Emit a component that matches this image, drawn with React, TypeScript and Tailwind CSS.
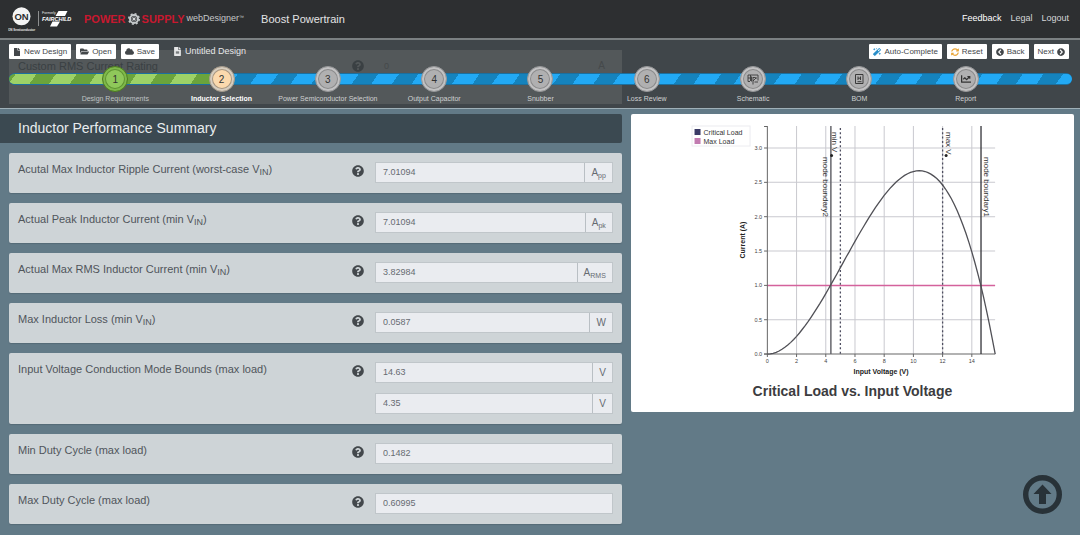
import React from "react";
import {
  FaChartLine,
  FaChevronCircleLeft,
  FaChevronCircleRight,
  FaCloud,
  FaFile,
  FaFileAlt,
  FaFolderOpen,
  FaMagic,
  FaQuestionCircle,
  FaSyncAlt,
} from "react-icons/fa";

type Field = { value: string; unit?: React.ReactNode };
type Row = { id: string; label: React.ReactNode; name: string; fields: Field[] };

const vin = (
  <>
    V<sub className="text-[9px]">IN</sub>
  </>
);

const sub = (base: string, lower: string) => (
  <span>
    {base}
    <sub className="text-[7px]">{lower}</sub>
  </span>
);

const rows: Row[] = [
  {
    id: "ripple",
    name: "Max inductor ripple current",
    label: <>Acutal Max Inductor Ripple Current (worst-case {vin})</>,
    fields: [{ value: "7.01094", unit: sub("A", "pp") }],
  },
  {
    id: "peak",
    name: "Peak inductor current",
    label: <>Actual Peak Inductor Current (min {vin})</>,
    fields: [{ value: "7.01094", unit: sub("A", "pk") }],
  },
  {
    id: "rms",
    name: "Max RMS inductor current",
    label: <>Actual Max RMS Inductor Current (min {vin})</>,
    fields: [{ value: "3.82984", unit: sub("A", "RMS") }],
  },
  {
    id: "loss",
    name: "Max inductor loss",
    label: <>Max Inductor Loss (min {vin})</>,
    fields: [{ value: "0.0587", unit: "W" }],
  },
  {
    id: "bounds",
    name: "Input voltage conduction mode bounds",
    label: "Input Voltage Conduction Mode Bounds (max load)",
    fields: [
      { value: "14.63", unit: "V" },
      { value: "4.35", unit: "V" },
    ],
  },
  {
    id: "dmin",
    name: "Min duty cycle",
    label: "Min Duty Cycle (max load)",
    fields: [{ value: "0.1482" }],
  },
  {
    id: "dmax",
    name: "Max duty cycle",
    label: "Max Duty Cycle (max load)",
    fields: [{ value: "0.60995" }],
  },
];

function OnLogo() {
  return (
    <svg viewBox="0 0 68 26" className="h-[26px] w-[68px]" aria-label="ON Semiconductor, formerly Fairchild">
      <circle cx="13.500" cy="10.300" r="9" fill="#f4f4f4" />
      <text x="13.500" y="14" textAnchor="middle" fontSize="9.500" fontWeight="bold" fill="#2d2f31" fontFamily="Liberation Sans, sans-serif">
        ON
      </text>
      <text x="13.500" y="24.500" textAnchor="middle" fontSize="3" fontWeight="bold" fill="#e8e8e8" fontFamily="Liberation Sans, sans-serif">
        ON Semiconductor
      </text>
      <path d="M30.500 5v15" stroke="#8d8f90" strokeWidth="1" />
      <text x="34" y="8" fontSize="3.500" fill="#e8e8e8" fontFamily="Liberation Sans, sans-serif">
        Formerly
      </text>
      <path d="M50.500 5h9l-2.500 5h-9.500zM44.500 15.500h7.500l-3 5h-7z" fill="#fff" />
      <text x="34" y="14.500" fontSize="5.500" fontWeight="bold" fontStyle="italic" fill="#fff" fontFamily="Liberation Sans, sans-serif">
        FAIRCHILD
      </text>
    </svg>
  );
}

function GearMark() {
  return (
    <svg viewBox="0 0 24 24" className="size-[12px]" aria-hidden="true">
      <circle cx="12" cy="12" r="8" fill="none" stroke="#c4c8ca" strokeWidth="4" />
      <circle cx="12" cy="12" r="10.500" fill="none" stroke="#c4c8ca" strokeWidth="3" strokeDasharray="4 4.240" />
      <path d="M12 6v12M6 12h12M8 8l8 8M16 8l-8 8" stroke="#a9aeb1" strokeWidth="1.500" />
      <circle cx="12" cy="12" r="2.500" fill="#d4d7d8" />
    </svg>
  );
}

function SchematicIcon() {
  return (
    <svg viewBox="0 0 12 12" className="size-[12px]" fill="none" stroke="#3a3a3a" strokeWidth="0.900" aria-hidden="true">
      <path d="M1 2h10v5.500M1 2v6.500h2M3.500 2v6M1 5h2.500M6 4v7.500M6 4.500h2.500M6 8l3-3M4.500 3.500v5M9 4v2M7.500 9h3.500" />
    </svg>
  );
}

function BomIcon() {
  return (
    <svg viewBox="0 0 12 12" className="size-[12px]" fill="none" stroke="#3a3a3a" strokeWidth="1" aria-hidden="true">
      <path d="M2.500 1.500h7.500v9h-7.500zM5 3.500v3.500M7.500 3.500v3.500M5 5.200h2.500M4.500 8.700h4" />
    </svg>
  );
}

const steps = [
  { label: "Design Requirements", mark: "1", state: "done" },
  { label: "Inductor Selection", mark: "2", state: "current" },
  { label: "Power Semiconductor Selection", mark: "3", state: "todo" },
  { label: "Output Capacitor", mark: "4", state: "todo" },
  { label: "Snubber", mark: "5", state: "todo" },
  { label: "Loss Review", mark: "6", state: "todo" },
  { label: "Schematic", mark: <SchematicIcon />, state: "todo" },
  { label: "BOM", mark: <BomIcon />, state: "todo" },
  { label: "Report", mark: <FaChartLine className="size-[10px]" />, state: "todo" },
];

const circleTone: Record<string, string> = {
  done: "border-[#4c7a1f] bg-[#8fc85a] shadow-[inset_0_0_0_2px_#7fb94b,inset_0_0_0_3px_#5f9332]",
  current: "border-[#a29a8e] bg-[#fbd9ad] shadow-[inset_0_0_0_2px_#d6cdbf,inset_0_0_0_3px_#a89680]",
  todo: "border-[#97989a] bg-[#b0b0b1] shadow-[inset_0_0_0_2px_#c2c2c3,inset_0_0_0_3px_#8b8b8c]",
};

const labelTone: Record<string, string> = {
  done: "text-[#bfc2c3]",
  current: "font-bold text-white",
  todo: "text-[#cfd1d2]",
};

function ToolButton({ children }: { children: React.ReactNode }) {
  return (
    <button type="button" className="flex h-[15px] items-center gap-[3px] rounded-[1px] bg-white px-[4px] text-[8px] leading-none whitespace-nowrap text-[#43474a]">
      {children}
    </button>
  );
}

function Stepper() {
  return (
    <div className="relative mr-[8px] ml-[9px]">
      <div className="absolute inset-x-0 top-[7px] flex h-[12px] overflow-hidden rounded-full border-y border-[#1b6f9e] bg-[#1583bd]">
        <div className="w-[20%] bg-[#6ba43c]" />
      </div>
      <div className="absolute inset-x-0 top-[7px] h-[12px] rounded-full bg-[repeating-linear-gradient(125deg,transparent_0_6px,#22a9f4_6px_23px,transparent_23px_33px)] [clip-path:inset(1px_0_1px_20%_round_0_5px_5px_0)]" />
      <div className="absolute inset-x-0 top-[7px] h-[12px] rounded-full bg-[repeating-linear-gradient(125deg,transparent_0_6px,#9dd267_6px_23px,transparent_23px_33px)] [clip-path:inset(1px_80%_1px_0_round_5px_0_0_5px)]" />
      <ol className="relative grid grid-cols-9 px-[5%]">
        {steps.map((s) => (
          <li key={s.label} className="flex flex-col items-center">
            <button
              type="button"
              aria-label={s.label}
              className={`flex size-[26px] items-center justify-center rounded-full border text-[10px] text-[#333] ${circleTone[s.state]}`}
            >
              {s.mark}
            </button>
            <span className={`mt-[2px] text-[7px] leading-[10px] whitespace-nowrap ${labelTone[s.state]}`}>{s.label}</span>
          </li>
        ))}
      </ol>
    </div>
  );
}

function ScrolledRow() {
  return (
    <div aria-hidden="true" className="absolute top-[10px] bottom-[4px] left-[9px] flex w-[56.750%] items-start bg-[#53585a] pt-[7px] pl-[9px] text-[11px] leading-[18px] text-[#3a4043]">
      <span className="w-[334px]">Custom RMS Current Rating</span>
      <FaQuestionCircle className="mt-[3px] size-[12px]" />
      <span className="ml-[20px] text-[9px] text-[#45494b]">0</span>
      <span className="mr-[17px] ml-auto text-[10px] text-[#45494b]">A</span>
    </div>
  );
}

function Header() {
  return (
    <header className="text-white">
      <div className="flex h-[38px] items-center bg-[#2d2f31] pr-[11px] pl-[8px]">
        <OnLogo />
        <div className="ml-[8px] flex items-center gap-[2px] text-[11px] font-bold text-[#c8182f]">
          <span>POWER</span>
          <GearMark />
          <span>SUPPLY</span>
          <span className="text-[9px] font-normal text-[#c6c8c9]">
            webDesigner<sup className="text-[5px]">™</sup>
          </span>
        </div>
        <h1 className="ml-[17px] text-[11px] text-[#e3e4e5]">Boost Powertrain</h1>
        <nav className="ml-auto flex gap-[9px] text-[9px] text-[#d4d6d7]">
          <a href="#feedback" className="text-white">Feedback</a>
          <a href="#legal">Legal</a>
          <a href="#logout">Logout</a>
        </nav>
      </div>
      <div className="relative h-[71px] border-t-2 border-b border-t-[#7b8082] border-b-[#9fb0b8] bg-[#40464a]">
        <ScrolledRow />
        <div className="relative flex items-center gap-[5px] pt-[4px] pr-[11px] pl-[9px]">
          <ToolButton><FaFile className="size-[8px]" />New Design</ToolButton>
          <ToolButton><FaFolderOpen className="size-[9px]" />Open</ToolButton>
          <ToolButton><FaCloud className="size-[9px]" />Save</ToolButton>
          <span className="ml-[9px] flex items-center gap-[3px] text-[9px] leading-none whitespace-nowrap text-[#e6e7e8]">
            <FaFileAlt className="size-[9px]" />
            Untitled Design
          </span>
          <div className="ml-auto flex gap-[5px]">
            <ToolButton><FaMagic className="size-[8px] text-[#2a8fc9]" />Auto-Complete</ToolButton>
            <ToolButton><FaSyncAlt className="size-[8px] text-[#e9a63a]" />Reset</ToolButton>
            <ToolButton><FaChevronCircleLeft className="size-[8px]" />Back</ToolButton>
            <ToolButton>Next<FaChevronCircleRight className="size-[8px]" /></ToolButton>
          </div>
        </div>
        <div className="pt-[7px]">
          <Stepper />
        </div>
      </div>
    </header>
  );
}

function ParameterRow({ row }: { row: Row }) {
  return (
    <div className="flex items-start rounded-[2px] bg-[#ced4d7] pt-[9px] pr-[9px] pb-[10px] pl-[9px] shadow-[0_1px_1px_#566b77]">
      <label htmlFor={`${row.id}-0`} className="flex-1 text-[11px] leading-[14px] text-[#50555b]">
        {row.label}
      </label>
      <FaQuestionCircle className="mt-[3px] mr-[11px] size-[12px] shrink-0 text-[#43484c]" />
      <div className="flex w-[40%] shrink-0 flex-col gap-[10px]">
        {row.fields.map((f, i) => (
          <div key={i} className="flex h-[21px] border border-[#c0c6ca] bg-[#eaecf0] text-[#666b72]">
            <input
              id={`${row.id}-${i}`}
              aria-label={i > 0 ? `${row.name} ${i + 1}` : undefined}
              readOnly
              defaultValue={f.value}
              className="min-w-0 flex-1 bg-transparent px-[7px] text-[9px] outline-none"
            />
            {f.unit && (
              <span className="border-l border-[#b9bfc4] px-[6px] text-[10px] leading-[19px]">{f.unit}</span>
            )}
          </div>
        ))}
      </div>
    </div>
  );
}

// Plot scales, in viewBox units.
const px = (v: number) => 136.300 + v * 14.600;
const py = (a: number) => 240 - a * 68.670;
const VOUT = 15.600;

const curve = Array.from({ length: 79 }, (_, i) => {
  const v = (i / 78) * VOUT;
  return `${i ? "L" : "M"}${px(v).toFixed(1)} ${py(0.004747 * v * v * (VOUT - v)).toFixed(1)}`;
}).join("");

function Chart() {
  const xs = [0, 2, 4, 6, 8, 10, 12, 14];
  const ys = [0, 0.5, 1, 1.5, 2, 2.5, 3];
  return (
    <svg viewBox="0 0 443 264" className="block w-full" fontFamily="Liberation Sans, Arial, sans-serif" role="img" aria-label="Critical load versus input voltage">
      <rect x="61" y="12" width="58" height="20" fill="#fff" stroke="#ececf0" />
      <rect x="63.500" y="15" width="6" height="6" fill="#3a3a66" />
      <rect x="63.500" y="24" width="6" height="6" fill="#c27bb0" />
      <g fontSize="7" fill="#333">
        <text x="72.500" y="20.500">Critical Load</text>
        <text x="72.500" y="29.500">Max Load</text>
      </g>
      <g stroke="#c9c9cf" strokeWidth="1">
        {xs.slice(1).map((v) => <path key={v} d={`M${px(v)} 12V240`} />)}
        {ys.slice(1).map((a) => a !== 1 && <path key={a} d={`M136 ${py(a)}H364`} />)}
      </g>
      <path d="M136 171.400H364" stroke="#d4629c" strokeWidth="1.400" />
      <g stroke="#666" strokeWidth="1">
        <path d="M133 12.500H136.300V240M133 240H364" fill="none" />
        {xs.map((v) => <path key={v} d={`M${px(v)} 240v3`} />)}
        {ys.map((a) => <path key={a} d={`M133 ${py(a)}h3`} />)}
      </g>
      <path d={`M${px(4.35)} 12V240`} stroke="#66666c" strokeWidth="1.500" />
      <path d={`M${px(14.63)} 12V240`} stroke="#333338" strokeWidth="1.300" />
      <g stroke="#4e4e60" strokeWidth="1.300" strokeDasharray="2 2.300">
        <path d={`M${px(5)} 14V240`} />
        <path d={`M${px(12)} 14V240`} />
      </g>
      <path d={curve} fill="none" stroke="#505056" strokeWidth="1.300" />
      <g fontSize="5.500" fill="#444">
        {xs.map((v) => <text key={v} x={px(v)} y="249" textAnchor="middle">{v}</text>)}
        {ys.map((a) => <text key={a} x="131" y={py(a) + 2} textAnchor="end">{a.toFixed(1)}</text>)}
      </g>
      <g fontSize="8" fill="#333">
        <text transform="translate(201 18) rotate(90)">min V</text>
        <text transform="translate(192 43) rotate(90)">mode boundary2</text>
        <text transform="translate(315 18) rotate(90)">max V</text>
        <text transform="translate(353 43) rotate(90)">mode boundary1</text>
      </g>
      <circle cx="200.500" cy="41.500" r="1.500" fill="#222" />
      <circle cx="315" cy="41.500" r="1.500" fill="#222" />
      <g fontSize="7" fontWeight="bold" fill="#222">
        <text x="250" y="260" textAnchor="middle">Input Voltage (V)</text>
        <text transform="translate(114 126) rotate(-90)" textAnchor="middle">Current (A)</text>
      </g>
    </svg>
  );
}

export default function App() {
  return (
    <div className="min-h-screen bg-[#627a87] font-['Liberation_Sans',Arial,sans-serif]">
      <Header />
      <main className="flex items-start gap-[9px] pt-[5px] pr-[6px] pb-[11px]">
        <section className="w-[57.900%]">
          <h2 className="mb-[10px] flex h-[29px] items-center rounded-r-[2px] bg-[#3b4951] pl-[18px] text-[14px] text-[#e9edef]">
            Inductor Performance Summary
          </h2>
          <form className="flex flex-col gap-[10px] pl-[9px]">
            {rows.map((row) => (
              <ParameterRow key={row.id} row={row} />
            ))}
          </form>
        </section>
        <figure className="flex-1 rounded-[2px] bg-white pb-[12px]">
          <Chart />
          <figcaption className="pt-[4px] text-center text-[14px] leading-[18px] font-bold text-[#3c3c40]">
            Critical Load vs. Input Voltage
          </figcaption>
        </figure>
      </main>
      <button type="button" aria-label="Back to top" className="fixed right-[18px] bottom-[21px] size-[39px]">
        <svg viewBox="0 0 39 39" className="size-full" aria-hidden="true">
          <circle cx="19.500" cy="19.500" r="16.800" fill="none" stroke="#283238" strokeWidth="5.400" />
          <path d="M19.500 9.500l9 9.500h-5.500v10h-7v-10h-5.500z" fill="#283238" />
        </svg>
      </button>
    </div>
  );
}
